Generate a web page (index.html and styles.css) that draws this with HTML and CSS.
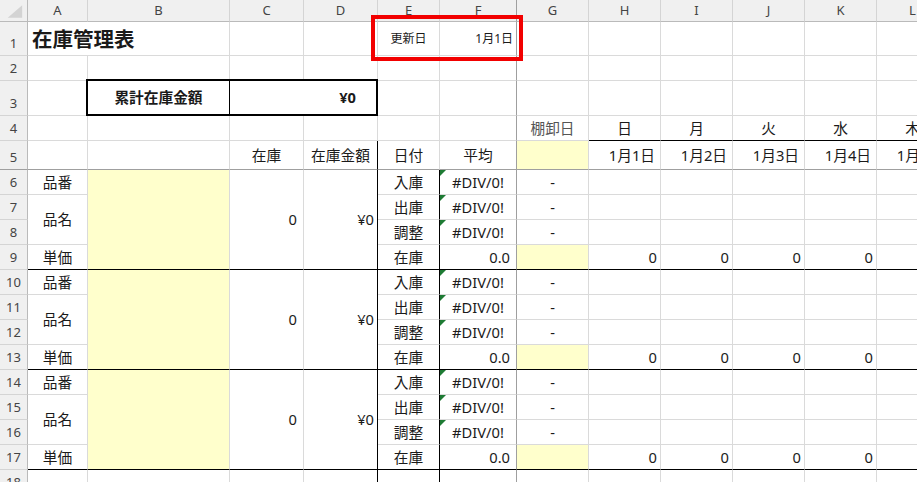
FILE: index.html
```html
<!DOCTYPE html>
<html lang="ja">
<head>
<meta charset="utf-8">
<title>在庫管理表</title>
<link rel="stylesheet" href="styles.css">
</head>
<body>
<div class="page">
  <div class="sheet">
    <!-- column headers -->
    <div class="c ch corner"><svg width="28" height="22" viewBox="0 0 28 22"><polygon points="8,18 23,18 23,5" fill="#d3d3d3"/></svg></div>
    <div class="c ch">A</div><div class="c ch">B</div><div class="c ch">C</div><div class="c ch">D</div><div class="c ch">E</div><div class="c ch fr">F</div><div class="c ch">G</div><div class="c ch">H</div><div class="c ch">I</div><div class="c ch">J</div><div class="c ch">K</div><div class="c ch">L</div>

    <!-- row 1 -->
    <div class="c rh">1</div>
    <div class="c l title span2">在庫管理表</div>
    <div class="c"></div><div class="c"></div>
    <div class="c small">更新日</div>
    <div class="c r small fr">1月1日</div>
    <div class="c"></div><div class="c"></div><div class="c"></div><div class="c"></div><div class="c"></div><div class="c"></div>

    <!-- row 2 -->
    <div class="c rh">2</div>
    <div class="c"></div><div class="c"></div><div class="c"></div><div class="c"></div><div class="c"></div><div class="c fr"></div>
    <div class="c"></div><div class="c"></div><div class="c"></div><div class="c"></div><div class="c"></div><div class="c"></div>

    <!-- row 3 -->
    <div class="c rh">3</div>
    <div class="c"></div>
    <div class="box"><div class="lbl">累計在庫金額</div><div class="val">¥0</div></div>
    <div class="c"></div><div class="c fr"></div>
    <div class="c"></div><div class="c"></div><div class="c"></div><div class="c"></div><div class="c"></div><div class="c"></div>

    <!-- row 4 -->
    <div class="c rh">4</div>
    <div class="c"></div><div class="c"></div><div class="c"></div><div class="c"></div><div class="c"></div><div class="c fr"></div>
    <div class="c muted">棚卸日</div>
    <div class="c bb">日</div><div class="c bb">月</div><div class="c bb">火</div><div class="c bb">水</div><div class="c bb">木</div>

    <!-- row 5 -->
    <div class="c rh fz">5</div>
    <div class="c fz"></div><div class="c fz"></div>
    <div class="c fz">在庫</div>
    <div class="c fz br">在庫金額</div>
    <div class="c fz">日付</div>
    <div class="c fz fr">平均</div>
    <div class="c fz y"></div>
    <div class="c fz r p4">1月1日</div><div class="c fz r p4">1月2日</div><div class="c fz r p4">1月3日</div><div class="c fz r p4">1月4日</div><div class="c fz r p4">1月5日</div>

    <!-- block 1 : rows 6-9 -->
    <div class="c rh">6</div>
    <div class="c">品番</div>
    <div class="c y rows4 bb"></div>
    <div class="c r p6 rows4 bb">0</div>
    <div class="c r rows4 br bb">¥0</div>
    <div class="c br">入庫</div>
    <div class="c fr err">#DIV/0!</div>
    <div class="c">-</div>
    <div class="c"></div><div class="c"></div><div class="c"></div><div class="c"></div><div class="c"></div>

    <div class="c rh">7</div>
    <div class="c rows2">品名</div>
    <div class="c br">出庫</div>
    <div class="c fr err">#DIV/0!</div>
    <div class="c">-</div>
    <div class="c"></div><div class="c"></div><div class="c"></div><div class="c"></div><div class="c"></div>

    <div class="c rh">8</div>
    <div class="c br">調整</div>
    <div class="c fr err">#DIV/0!</div>
    <div class="c">-</div>
    <div class="c"></div><div class="c"></div><div class="c"></div><div class="c"></div><div class="c"></div>

    <div class="c rh">9</div>
    <div class="c bb">単価</div>
    <div class="c br bb">在庫</div>
    <div class="c r p6 fr bb">0.0</div>
    <div class="c y bb"></div>
    <div class="c r bb">0</div><div class="c r bb">0</div><div class="c r bb">0</div><div class="c r bb">0</div><div class="c r bb">0</div>

    <!-- block 2 : rows 10-13 -->
    <div class="c rh">10</div>
    <div class="c">品番</div>
    <div class="c y rows4 bb"></div>
    <div class="c r p6 rows4 bb">0</div>
    <div class="c r rows4 br bb">¥0</div>
    <div class="c br">入庫</div>
    <div class="c fr err">#DIV/0!</div>
    <div class="c">-</div>
    <div class="c"></div><div class="c"></div><div class="c"></div><div class="c"></div><div class="c"></div>

    <div class="c rh">11</div>
    <div class="c rows2">品名</div>
    <div class="c br">出庫</div>
    <div class="c fr err">#DIV/0!</div>
    <div class="c">-</div>
    <div class="c"></div><div class="c"></div><div class="c"></div><div class="c"></div><div class="c"></div>

    <div class="c rh">12</div>
    <div class="c br">調整</div>
    <div class="c fr err">#DIV/0!</div>
    <div class="c">-</div>
    <div class="c"></div><div class="c"></div><div class="c"></div><div class="c"></div><div class="c"></div>

    <div class="c rh">13</div>
    <div class="c bb">単価</div>
    <div class="c br bb">在庫</div>
    <div class="c r p6 fr bb">0.0</div>
    <div class="c y bb"></div>
    <div class="c r bb">0</div><div class="c r bb">0</div><div class="c r bb">0</div><div class="c r bb">0</div><div class="c r bb">0</div>

    <!-- block 3 : rows 14-17 -->
    <div class="c rh">14</div>
    <div class="c">品番</div>
    <div class="c y rows4 bb"></div>
    <div class="c r p6 rows4 bb">0</div>
    <div class="c r rows4 br bb">¥0</div>
    <div class="c br">入庫</div>
    <div class="c fr err">#DIV/0!</div>
    <div class="c">-</div>
    <div class="c"></div><div class="c"></div><div class="c"></div><div class="c"></div><div class="c"></div>

    <div class="c rh">15</div>
    <div class="c rows2">品名</div>
    <div class="c br">出庫</div>
    <div class="c fr err">#DIV/0!</div>
    <div class="c">-</div>
    <div class="c"></div><div class="c"></div><div class="c"></div><div class="c"></div><div class="c"></div>

    <div class="c rh">16</div>
    <div class="c br">調整</div>
    <div class="c fr err">#DIV/0!</div>
    <div class="c">-</div>
    <div class="c"></div><div class="c"></div><div class="c"></div><div class="c"></div><div class="c"></div>

    <div class="c rh">17</div>
    <div class="c bb">単価</div>
    <div class="c br bb">在庫</div>
    <div class="c r p6 fr bb">0.0</div>
    <div class="c y bb"></div>
    <div class="c r bb">0</div><div class="c r bb">0</div><div class="c r bb">0</div><div class="c r bb">0</div><div class="c r bb">0</div>

    <!-- row 18 -->
    <div class="c rh">18</div>
    <div class="c"></div><div class="c"></div><div class="c"></div><div class="c br"></div><div class="c br"></div><div class="c fr"></div>
    <div class="c"></div><div class="c"></div><div class="c"></div><div class="c"></div><div class="c"></div><div class="c"></div>
  </div>
  <div class="mark"></div>
</div>
</body>
</html>
```

FILE: styles.css
```css
* { box-sizing: border-box; }

html, body {
  margin: 0;
  padding: 0;
}

body {
  width: 917px;
  height: 482px;
  overflow: hidden;
  background: #ffffff;
  font-family: "Noto Sans", "Noto Sans CJK JP", sans-serif;
  color: #1a1a1a;
}

.page {
  position: relative;
  width: 917px;
  height: 482px;
  overflow: hidden;
}

.sheet {
  display: grid;
  grid-template-columns: 28px 60px 142px 74px 74px 62px 77px repeat(6, 72px);
  grid-template-rows: 22px 34px 25px 35px 25px 29px repeat(13, 25px);
  width: 949px;
  font-size: 14.7px;
}

.c {
  display: flex;
  align-items: center;
  justify-content: center;
  min-width: 0;
  padding: 0 3px;
  border-right: 1px solid #dadada;
  border-bottom: 1px solid #dadada;
  white-space: nowrap;
  line-height: 1;
  background: #ffffff;
}

/* headers */
.ch {
  background: #f0f0f0;
  color: #444444;
  font-size: 13px;
  border-right-color: #d4d4d4;
  border-bottom-color: #bababa;
}

.corner {
  padding: 0;
  align-items: stretch;
  justify-content: stretch;
  border-right-color: #bababa;
}

.rh {
  background: #f0f0f0;
  color: #444444;
  font-size: 13px;
  align-items: flex-end;
  padding: 0 0 5px 0;
  border-right-color: #bababa;
  border-bottom-color: #d4d4d4;
}

/* alignment */
.l { justify-content: flex-start; padding-left: 4px; }
.r { justify-content: flex-end; }
.p4 { padding-right: 5px; }
.p6 { padding-right: 6px; }

/* spans */
.span2 { grid-column: span 2; }
.rows2 { grid-row: span 2; }
.rows4 { grid-row: span 4; }

/* text styles */
.title {
  font-family: "Noto Sans CJK JP", sans-serif;
  font-size: 20.5px;
  font-weight: 700;
  overflow: visible;
}

.small { font-size: 12px; }
.muted { color: #555555; }

/* fills and borders */
.y { background: #ffffcc; }
.bb { border-bottom-color: #000000; }
.br { border-right-color: #000000; }
.fr { border-right-color: #9f9f9f; }
.fz { border-bottom-color: #9f9f9f; }

/* error indicator */
.err { position: relative; }
.err::before {
  content: "";
  position: absolute;
  left: 0;
  top: 0;
  border-top: 6px solid #1e7b34;
  border-right: 6px solid transparent;
}

/* total box */
.box {
  grid-column: span 3;
  margin: -2px 0 0 -2px;
  border: 2px solid #000000;
  display: flex;
  position: relative;
  z-index: 1;
  background: #ffffff;
  font-weight: 700;
  line-height: 1;
}

.box .lbl {
  width: 142px;
  flex: none;
  display: flex;
  align-items: center;
  justify-content: center;
  border-right: 1px solid #000000;
}

.box .val {
  flex: 1;
  display: flex;
  align-items: center;
  justify-content: flex-end;
  padding-right: 20px;
}

/* red annotation box */
.mark {
  position: absolute;
  left: 371px;
  top: 15px;
  width: 152px;
  height: 46px;
  border: 4px solid #f20000;
}
```
